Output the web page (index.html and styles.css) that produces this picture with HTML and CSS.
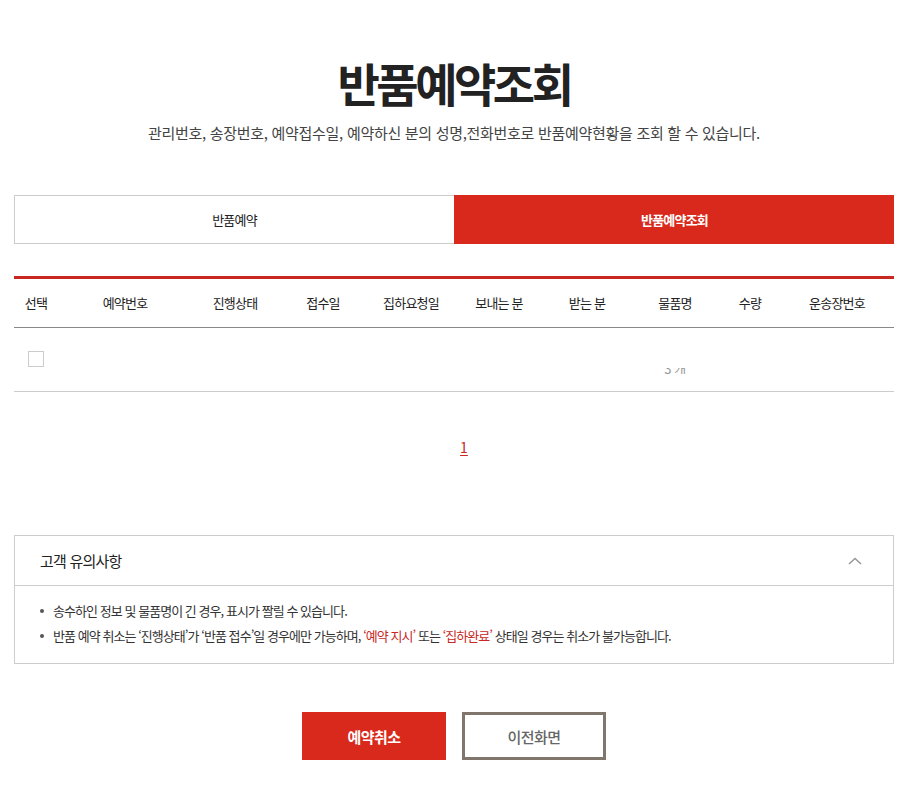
FILE: index.html
```html
<!DOCTYPE html>
<html lang="ko">
<head>
<meta charset="utf-8">
<title>반품예약조회</title>
<link rel="stylesheet" href="styles.css">
</head>
<body>
<div class="page">
  <h1 class="title">반품예약조회</h1>
  <p class="subtitle">관리번호, 송장번호, 예약접수일, 예약하신 분의 성명,전화번호로 반품예약현황을 조회 할 수 있습니다.</p>

  <div class="tabs">
    <div class="tab">반품예약</div>
    <div class="tab tab-active">반품예약조회</div>
  </div>

  <table class="list">
    <colgroup>
      <col class="c1"><col class="c2"><col class="c3"><col class="c4"><col class="c5">
      <col class="c6"><col class="c7"><col class="c8"><col class="c9"><col class="c10">
    </colgroup>
    <thead>
      <tr>
        <th>선택</th><th>예약번호</th><th>진행상태</th><th>접수일</th><th>집하요청일</th>
        <th>보내는 분</th><th>받는 분</th><th>물품명</th><th>수량</th><th>운송장번호</th>
      </tr>
    </thead>
    <tbody>
      <tr>
        <td><span class="chk"></span></td>
        <td></td><td></td><td></td><td></td><td></td><td></td>
        <td><div class="clip"><span>3 개</span></div></td>
        <td></td><td></td>
      </tr>
    </tbody>
  </table>

  <div class="paging"><a class="page-num">1</a></div>

  <div class="notice">
    <div class="notice-head">
      <span>고객 유의사항</span>
      <svg class="chev" width="14" height="8" viewBox="0 0 14 8"><path d="M1 7 L7 1.5 L13 7" fill="none" stroke="#999" stroke-width="1.6"/></svg>
    </div>
    <ul class="notice-list">
      <li>송수하인 정보 및 물품명이 긴 경우, 표시가 짤릴 수 있습니다.</li>
      <li>반품 예약 취소는 ‘진행상태’가 ‘반품 접수’일 경우에만 가능하며, <em>‘예약 지시’</em> 또는 <em>‘집하완료’</em> 상태일 경우는 취소가 불가능합니다.</li>
    </ul>
  </div>

  <div class="buttons">
    <button class="btn btn-red">예약취소</button>
    <button class="btn btn-line">이전화면</button>
  </div>
</div>
</body>
</html>
```
FILE: styles.css
```css
* { box-sizing: border-box; }
html, body { margin: 0; padding: 0; background: #fff; }
body {
  font-family: "Noto Sans CJK KR", "Noto Sans", sans-serif;
  color: #222;
}
.page {
  width: 880px;
  margin: 0 15px 0 14px;
  padding-top: 52px;
  padding-bottom: 25px;
}
.title {
  margin: 0;
  text-align: center;
  font-size: 46px;
  line-height: 60px;
  font-weight: 700;
  letter-spacing: -3.5px;
  color: #222;
}
.subtitle {
  margin: 10px 0 0;
  text-align: center;
  font-size: 15px;
  line-height: 22px;
  letter-spacing: -0.3px;
  color: #444;
}
.tabs {
  margin-top: 51px;
  display: flex;
  height: 49px;
}
.tab {
  flex: 1;
  display: flex;
  align-items: center;
  justify-content: center;
  border: 1px solid #ccc;
  border-right: 0;
  font-size: 13px;
  letter-spacing: -0.8px;
  color: #222;
}
.tab-active {
  background: #d9291c;
  border-color: #d9291c;
  color: #fff;
  font-weight: 700;
}
.list {
  margin-top: 32px;
  width: 100%;
  border-collapse: collapse;
  table-layout: fixed;
  border-top: 3px solid #c8281f;
}
.c1 { width: 44px; } .c2 { width: 134px; } .c3 { width: 86px; } .c4 { width: 90px; }
.c5 { width: 86px; } .c6 { width: 90px; } .c7 { width: 86px; } .c8 { width: 90px; }
.c9 { width: 60px; } .c10 { width: 114px; }
.list th {
  height: 50px;
  font-size: 13px;
  font-weight: 400;
  letter-spacing: -0.8px;
  color: #222;
  text-align: center;
  border-bottom: 1px solid #888;
  padding: 0 0 2px;
}
.list td {
  height: 64px;
  border-bottom: 1px solid #ccc;
  padding: 0;
  text-align: center;
  vertical-align: top;
}
.chk {
  display: inline-block;
  width: 16px;
  height: 16px;
  border: 1px solid #ccc;
  margin-top: 23px;
}
.clip {
  height: 6px;
  margin-top: 40px;
  overflow: hidden;
  text-align: center;
}
.clip span {
  display: block;
  margin-top: -9px;
  font-size: 13px;
  line-height: 20px;
  color: #999;
  letter-spacing: -0.5px;
}
.paging {
  margin-top: 42px;
  padding-left: 20px;
  text-align: center;
  height: 20px;
}
.page-num {
  display: inline-block;
  font-size: 14px;
  line-height: 16px;
  color: #c8281f;
  text-decoration: underline;
  text-underline-offset: 2px;
}
.notice {
  margin-top: 81px;
  border: 1px solid #ccc;
}
.notice-head {
  height: 50px;
  display: flex;
  align-items: center;
  justify-content: space-between;
  padding: 0 31px 0 25px;
  border-bottom: 1px solid #ccc;
  font-size: 15px;
  letter-spacing: -0.8px;
  color: #222;
}
.notice-list {
  list-style: none;
  margin: 0;
  padding: 12px 0 15px 25px;
}
.notice-list li {
  position: relative;
  padding-left: 13px;
  font-size: 13px;
  line-height: 25px;
  letter-spacing: -0.95px;
  color: #333;
}
.notice-list li::before {
  content: "";
  position: absolute;
  left: 0;
  top: 11px;
  width: 4px;
  height: 4px;
  border-radius: 50%;
  background: #555;
}
.notice-list em {
  font-style: normal;
  color: #c8281f;
}
.buttons {
  margin-top: 48px;
  display: flex;
  justify-content: center;
  gap: 16px;
}
.btn {
  width: 144px;
  height: 48px;
  font-family: inherit;
  font-size: 15px;
  letter-spacing: -0.5px;
  cursor: pointer;
  padding: 0;
}
.btn-red {
  background: #d9291c;
  border: 0;
  color: #fff;
  font-weight: 700;
}
.btn-line {
  background: #fff;
  border: 3px solid #80766b;
  color: #666;
  font-weight: 500;
}
```
